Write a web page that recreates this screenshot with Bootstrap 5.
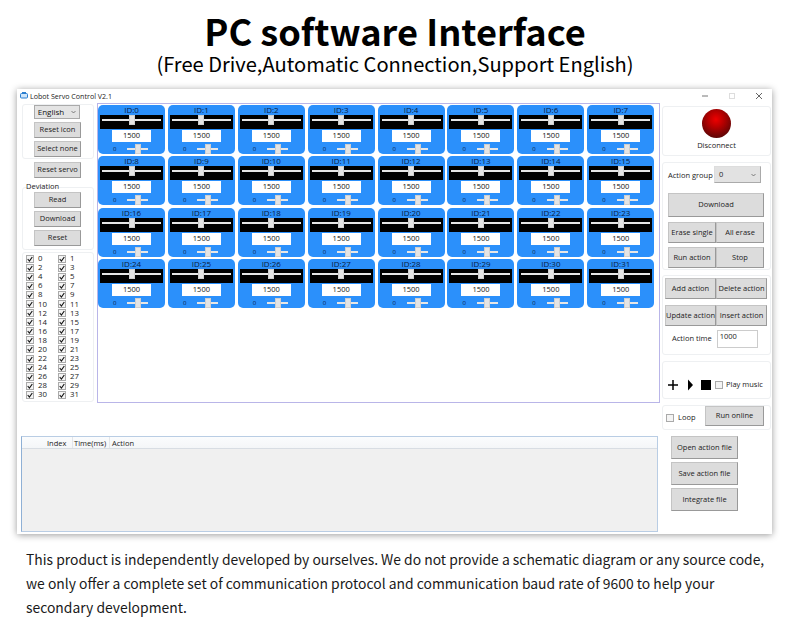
<!DOCTYPE html>
<html lang="en"><head><meta charset="utf-8"><title>PC software Interface</title>
<link href="https://cdn.jsdelivr.net/npm/bootstrap@5.3.0/dist/css/bootstrap.min.css" rel="stylesheet">
<style>
html,body{margin:0;background:#fff;width:790px;height:624px;overflow:hidden}
.hero{height:89px;font-family:"Noto Sans CJK SC","Noto Sans",sans-serif;color:#000}
.hero-title{font-size:36.2px;font-weight:700;line-height:40px;padding-top:10px;margin:0}
.hero-sub{font-size:20.1px;line-height:26px;margin:0;padding-top:1px}
.win{width:755px;height:445px;margin-left:17px;background:#fff;box-shadow:0 1px 7px rgba(0,0,0,.4);font-family:"Open Sans","Noto Sans",sans-serif;font-size:7.5px;color:#222}
.tbar{height:14px;padding-left:3px}
.tbar-title{font-size:7.1px;margin-left:2px}
.winctl{gap:19px;padding-right:9px;color:#777}
.area{width:645px;padding-left:4px}
.lcol{width:72px;margin-left:1px;margin-right:3px;padding-top:1px}
.pn{border:1px solid #eef0f2;border-radius:3px}
.p1{height:55px}
.p2{height:63px;padding-top:4px;margin-top:-4px}
.p3{height:150px;margin-top:2px;padding:1px 0 0 3px;display:grid;grid-template-columns:32px 32px;grid-auto-rows:9.1px;align-items:center}
.wbtn{display:flex;align-items:center;justify-content:center;padding:0;border-radius:0;background:#dcdcdc;border:1px solid;border-color:#c4c4c4 #999 #999 #c4c4c4;font-size:7.5px;color:#222;white-space:nowrap;line-height:1}
.wbtn:hover{background:#dcdcdc;color:#222;border-color:#c4c4c4 #999 #999 #c4c4c4}
.lb{width:47px;height:16px;margin:0 0 3px 11px}
.lang{width:46px;height:14px;margin:0 0 3px 11px;font-size:8px;background:#e4e4e4;border-color:#aaa;gap:7px;color:#111}
.rsv{margin:3px 0 0 12px}
.dev{height:10px;line-height:10px;margin:3px 0 0 4px;font-size:7.5px;position:relative}
.cb{width:8px;height:8px;background:#f4f4f4;border:1px solid #aaa;margin-right:4px;flex:none;display:flex}
.cb svg{display:block;width:6px;height:6px}
.ckrow{font-size:7.8px;line-height:9px}
.stage{width:563px;height:300px;border:1px solid #b9b5e8;padding:1px 0 0 0;display:grid;grid-template-columns:repeat(8,67px);column-gap:2.9px;row-gap:2.33px;grid-auto-rows:49px;align-content:start}
.srv{background:#2b90fb;border-radius:5px;display:flex;flex-direction:column}
.srv-id{height:10px;line-height:9px;text-align:center;color:#0b1c3e;font-size:8px}
.srv-bar{height:14px;margin:0 2px;background:#000;padding:0 2px}
.trk{height:10px;display:flex;justify-content:center;align-items:center;background:linear-gradient(#e6e6e6,#e6e6e6) center/100% 2px no-repeat}
.thumb{width:6px;height:10px;background:#e4e4e4;border:1px solid #cfcfcf}
.srv-val{width:39px;height:12px;margin:1px auto 0;background:#fff;text-align:center;line-height:11px;color:#111;font-size:7.5px}
.srv-low{height:10px;margin-top:2px;padding-left:15px;color:#0b1c3e;font-size:6px;line-height:10px}
.trk-s{width:21px;margin-left:11px}
.tbl{width:637px;height:96px;margin-top:33px;border:1px solid #b9cde4;border-left-color:#8fb0d5;background:#f0f0f0}
.tbl-h{height:12px;background:linear-gradient(#fbfcfd,#f4f6f8);border-bottom:1px solid #d8dde3;padding-left:24px;line-height:12px}
.th1{width:27px;border-right:1px solid #e3e6ea;padding-left:1px}
.th2{width:37px;border-right:1px solid #e3e6ea;padding-left:1px}
.th3{padding-left:2px}
.rcol{width:109px;padding-top:3px}
.pa{height:50px;text-align:center;padding-top:2px}
.led{width:29px;height:29px;border-radius:50%;background:radial-gradient(circle at 48% 36%,#ee0000 0,#b80000 32%,#760404 65%,#300808 100%);margin:0 auto 2px}
.pb{height:108px;margin-top:6px;padding:3px 0 0 5px}
.gl{width:46px;line-height:10px}
.sel{width:47px;height:17px;background:#e2e2e2;border:1px solid;border-color:#ddd #aaa #aaa #ddd;padding:0 4px;justify-content:space-between}
.dl{width:96px;height:24px;margin-top:10px;font-size:7.5px}
.h21{width:48px;height:21px}
.mt4{margin-top:4px}
.mt5{margin-top:5px}
.pc{height:80px;margin-top:5px;padding:2px 0 0 2px}
.w50{width:51px;height:21px}
.mt6{margin-top:6px}
.at{padding-left:7px;margin-top:4px;gap:5px}
.tin{width:41px;height:18px;border:1px solid #ccc;padding-left:2px;line-height:11px;font-size:7.5px;background:#fff}
.pd{height:38px;margin-top:6px;padding:9px 0 0 4px}
.ico-plus{margin-right:9px}
.ico-tri{margin-right:8px}
.ico-sq{width:10px;height:10px;background:#000;display:block;margin-right:4px}
.pe{height:25px;margin-top:6px;padding-left:3px}
.run{width:59px;height:20px;margin-left:auto;margin-right:6px}
.fb{width:67px;height:23px;margin:3px 0 0 9px}
.fb1{margin-top:6px}
.cb3{margin-right:3px}
.ftext{font-family:"Noto Sans CJK SC","Noto Sans",sans-serif;font-size:13.9px;line-height:24px;color:#1a1a1a;margin:13px 0 0 26px;white-space:nowrap}
</style></head>
<body>
<header class="hero text-center">
<h1 class="hero-title">PC software Interface</h1>
<p class="hero-sub">(Free Drive,Automatic Connection,Support English)</p>
</header>
<main class="win">
<div class="tbar d-flex align-items-center justify-content-between">
<div class="d-flex align-items-center">
<svg width="8" height="7" viewBox="0 0 8 7"><rect x=".5" y="1.5" width="7" height="4.5" rx="1" fill="#cfe6fb" stroke="#2b7fd0"/><rect x="2" y="0" width="4" height="1.5" fill="#2b7fd0"/></svg>
<span class="tbar-title">Lobot Servo Control V2.1</span></div>
<div class="winctl d-flex align-items-center">
<svg width="8" height="8" viewBox="0 0 8 8"><path d="M1 4h6" stroke="#777"/></svg>
<svg width="8" height="8" viewBox="0 0 8 8"><rect x="1.500" y="1.500" width="5" height="5" fill="none" stroke="#ddd"/></svg>
<svg width="8" height="8" viewBox="0 0 8 8"><path d="M1 1l6 6M7 1l-6 6" stroke="#555" stroke-width=".9"/></svg>
</div></div>
<div class="d-flex">
<div class="area">
<div class="d-flex">
<div class="lcol">
<div class="pn p1">
<div class="wbtn lang"><span>English</span><svg width="5" height="4" viewBox="0 0 5 4"><path d="M.5 1l2 2 2-2" fill="none" stroke="#555" stroke-width=".7"/></svg></div>
<button class="btn wbtn lb">Reset icon</button>
<button class="btn wbtn lb">Select none</button>
</div>
<button class="btn wbtn lb rsv">Reset servo</button>
<div class="dev">Deviation</div>
<div class="pn p2">
<button class="btn wbtn lb">Read</button>
<button class="btn wbtn lb">Download</button>
<button class="btn wbtn lb">Reset</button>
</div>
<div class="pn p3" id="checks"></div>
</div>
<div class="stage" id="stage"></div>
</div>
<div class="tbl">
<div class="tbl-h d-flex"><div class="th1">Index</div><div class="th2">Time(ms)</div><div class="th3">Action</div></div>
</div>
</div>
<aside class="rcol">
<div class="pn pa"><div class="led"></div><div>Disconnect</div></div>
<div class="pn pb">
<div class="d-flex align-items-start"><span class="gl mt-1">Action group</span>
<div class="sel d-flex align-items-center"><span>0</span><svg width="5" height="4" viewBox="0 0 5 4"><path d="M.5 1l2 2 2-2" fill="none" stroke="#555" stroke-width=".7"/></svg></div></div>
<button class="btn wbtn dl">Download</button>
<div class="d-flex mt5"><button class="btn wbtn h21">Erase single</button><button class="btn wbtn h21">All erase</button></div>
<div class="d-flex mt4"><button class="btn wbtn h21">Run action</button><button class="btn wbtn h21">Stop</button></div>
</div>
<div class="pn pc">
<div class="d-flex"><button class="btn wbtn w50">Add action</button><button class="btn wbtn w50">Delete action</button></div>
<div class="d-flex mt6"><button class="btn wbtn w50">Update action</button><button class="btn wbtn w50">Insert action</button></div>
<div class="d-flex align-items-center at"><span>Action time</span><div class="tin">1000</div></div>
</div>
<div class="pn pd d-flex align-items-center">
<svg width="12" height="12" viewBox="0 0 12 12" class="ico-plus"><path d="M6 1v10M1 6h10" stroke="#000" stroke-width="1.500"/></svg>
<svg width="5" height="12" viewBox="0 0 5 12" class="ico-tri"><path d="M0 .5L5 6 0 11.500z" fill="#000"/></svg>
<span class="ico-sq"></span>
<span class="cb cb3"></span><span>Play music</span>
</div>
<div class="pn pe d-flex align-items-start">
<span class="cb align-self-center"></span><span class="align-self-center">Loop</span>
<button class="btn wbtn run">Run online</button>
</div>
<button class="btn wbtn fb fb1">Open action file</button>
<button class="btn wbtn fb">Save action file</button>
<button class="btn wbtn fb">Integrate file</button>
</aside>
</div>
</main>
<p class="ftext">This product is independently developed by ourselves. We do not provide a schematic diagram or any source code,<br>we only offer a complete set of communication protocol and communication baud rate of 9600 to help your<br>secondary development.</p>
<script>
var s='',c='';
for(var i=0;i<32;i++){
s+='<div class="srv"><div class="srv-id">ID:'+i+'</div><div class="srv-bar"><div class="trk"><div class="thumb"></div></div></div><div class="srv-val">1500</div><div class="srv-low d-flex align-items-center"><span>0</span><div class="trk trk-s"><div class="thumb"></div></div></div></div>';
c+='<div class="ckrow d-flex align-items-center"><span class="cb"><svg viewBox="0 0 6 6"><path d="M.7 3l1.700 2L5.300 1" fill="none" stroke="#111" stroke-width="1.100"/></svg></span><span>'+i+'</span></div>';
}
document.getElementById('stage').innerHTML=s;
document.getElementById('checks').innerHTML=c;
</script>
<script src="https://cdn.jsdelivr.net/npm/bootstrap@5.3.0/dist/js/bootstrap.bundle.min.js"></script>
</body></html>
